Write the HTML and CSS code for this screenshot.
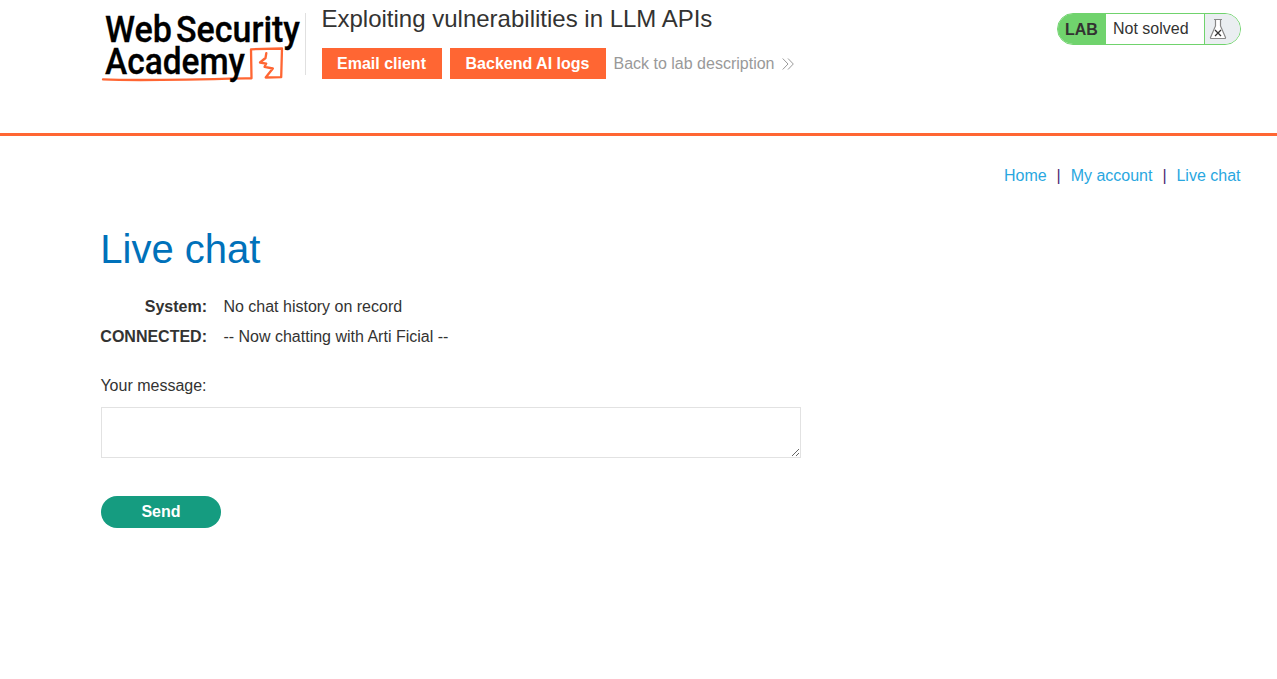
FILE: index.html
```html
<!DOCTYPE html>
<html lang="en">
<head>
<meta charset="utf-8">
<title>Exploiting vulnerabilities in LLM APIs</title>
<link rel="stylesheet" href="styles.css">
</head>
<body>
<header class="lab-header">
  <svg class="logo" width="204" height="90" viewBox="101 0 204 90" role="img" aria-label="Web Security Academy">
    <path class="logo-line" d="M103 79.4 C140 81 200 79.5 251.5 78.3 L251 49.3 L282 48.5 L281.2 77.2 L265.7 77.5 L272.8 68.5 L264.6 66.8 L266.2 63.6 L260 62.5 L265.5 58 L266.3 53.2"/>
    <text class="logo-text" x="105" y="41.6" textLength="67" lengthAdjust="spacingAndGlyphs">Web</text>
    <text class="logo-text" x="176" y="41.6" textLength="124" lengthAdjust="spacingAndGlyphs">Security</text>
    <text class="logo-text" x="105" y="74.4" textLength="140" lengthAdjust="spacingAndGlyphs">Academy</text>
  </svg>
  <div class="title-block">
    <h2 class="lab-title">Exploiting vulnerabilities in LLM APIs</h2>
    <div class="actions">
      <a class="button">Email client</a>
      <a class="button">Backend AI logs</a>
      <a class="back">Back to lab description
        <svg width="12" height="12" viewBox="0 0 12 12"><path d="M.7 .5 L6 6 L.7 11.5 M6 .5 L11.3 6 L6 11.5"/></svg>
      </a>
    </div>
  </div>
  <div class="status">
    <span class="status-label">LAB</span>
    <span class="status-text">Not solved</span>
    <span class="status-icon">
      <svg width="18" height="22" viewBox="0 0 18 22">
        <path class="flask" d="M5 1.5H13M6.5 1.5V8L1.5 19.5Q1.2 20.5 2.2 20.5H15.8Q16.8 20.5 16.5 19.5L11.5 8V1.5"/>
        <path class="cross" d="M6 12L12 18M12 12L6 18"/>
      </svg>
    </span>
  </div>
</header>
<main class="page">
  <nav class="nav"><a>Home</a><span>|</span><a>My account</a><span>|</span><a>Live chat</a></nav>
  <h1 class="heading">Live chat</h1>
  <div class="log">
    <strong>System:</strong><span>No chat history on record</span>
    <strong>CONNECTED:</strong><span>-- Now chatting with Arti Ficial --</span>
  </div>
  <form class="form">
    <label for="message">Your message:</label>
    <textarea id="message" class="message"></textarea>
    <button class="send" type="button">Send</button>
  </form>
</main>
</body>
</html>
```
FILE: styles.css
```css
* { box-sizing: border-box; }
body { margin: 0; background: #fff; color: #333332; font: 16px/18px "Liberation Sans", Arial, sans-serif; }
h1, h2 { margin: 0; font-weight: 400; }

.lab-header { display: flex; align-items: flex-start; height: 136px; padding: 0 36px 0 101px; border-bottom: 3px solid #ff6633; }
.logo { flex: none; overflow: visible; }
.logo-text { font: 500 37.5px Roboto, sans-serif; fill: #000; stroke: #000; stroke-width: .3; }
.logo-line { fill: none; stroke: #ff6633; stroke-width: 2.3; stroke-linejoin: round; stroke-linecap: round; }
.title-block { display: flex; position: relative; flex-direction: column; flex: 1; margin-top: 5px; padding-left: 17px; }
.title-block::before { content: ""; position: absolute; left: 0; top: 8px; width: 1px; height: 62px; background: #e0e0e0; }
.lab-title { margin-left: -.5px; font-size: 24px; line-height: 28px; }
.actions { display: flex; align-items: center; gap: 8px; margin-top: 15px; }
.button { width: 120px; height: 31px; padding-right: 1px; background: #ff6633; color: #fff; font-weight: 700; line-height: 31px; text-align: center; }
.button + .button { width: 156px; }
.back { display: flex; align-items: center; gap: 8px; margin-left: -.5px; color: #999; }
.back svg { fill: none; stroke: #999; stroke-width: 1; }

.status { display: flex; width: 184px; height: 32px; margin-top: 13px; border: 1px solid #70d36d; border-radius: 16px; overflow: hidden; line-height: 30px; }
.status-label { width: 48px; padding-left: 7px; background: #70d36d; font-weight: 700; line-height: 32px; }
.status-text { flex: 1; padding-left: 7px; }
.status-icon { display: flex; align-items: center; width: 36px; padding-left: 4px; border-left: 1px solid #70d36d; background: #eaeef1; }
.flask { fill: #fff; stroke: #888; stroke-width: 1.2; }
.cross { fill: none; stroke: #333; stroke-width: 1.3; }

.page { padding: 31px 36px 0 101px; }
.nav { display: flex; justify-content: flex-end; margin-right: .5px; color: #4a2a70; }
.nav span { width: 24px; text-align: center; }
.nav a { color: #29a7df; }
.heading { margin: 40px 0 0 -.7px; color: #0071ba; font-size: 40px; line-height: 48px; }
.log { display: grid; grid-template-columns: 106px auto; gap: 12px 16.4px; margin-top: 25px; }
.log strong { justify-self: end; white-space: nowrap; }
.form { display: flex; flex-direction: column; align-items: flex-start; margin-top: 31px; }
.form label { margin-left: -.6px; }
.message { display: block; width: 700px; height: 51px; margin: 12px 0 38px; padding: 4px; border: 1px solid #e2e2e2; outline: 0; font: inherit; resize: both; }
.send { width: 120px; height: 32px; padding: 0; border: 0; border-radius: 16px; background: #159c80; color: #fff; font: 700 16px/32px "Liberation Sans", Arial, sans-serif; }
```
